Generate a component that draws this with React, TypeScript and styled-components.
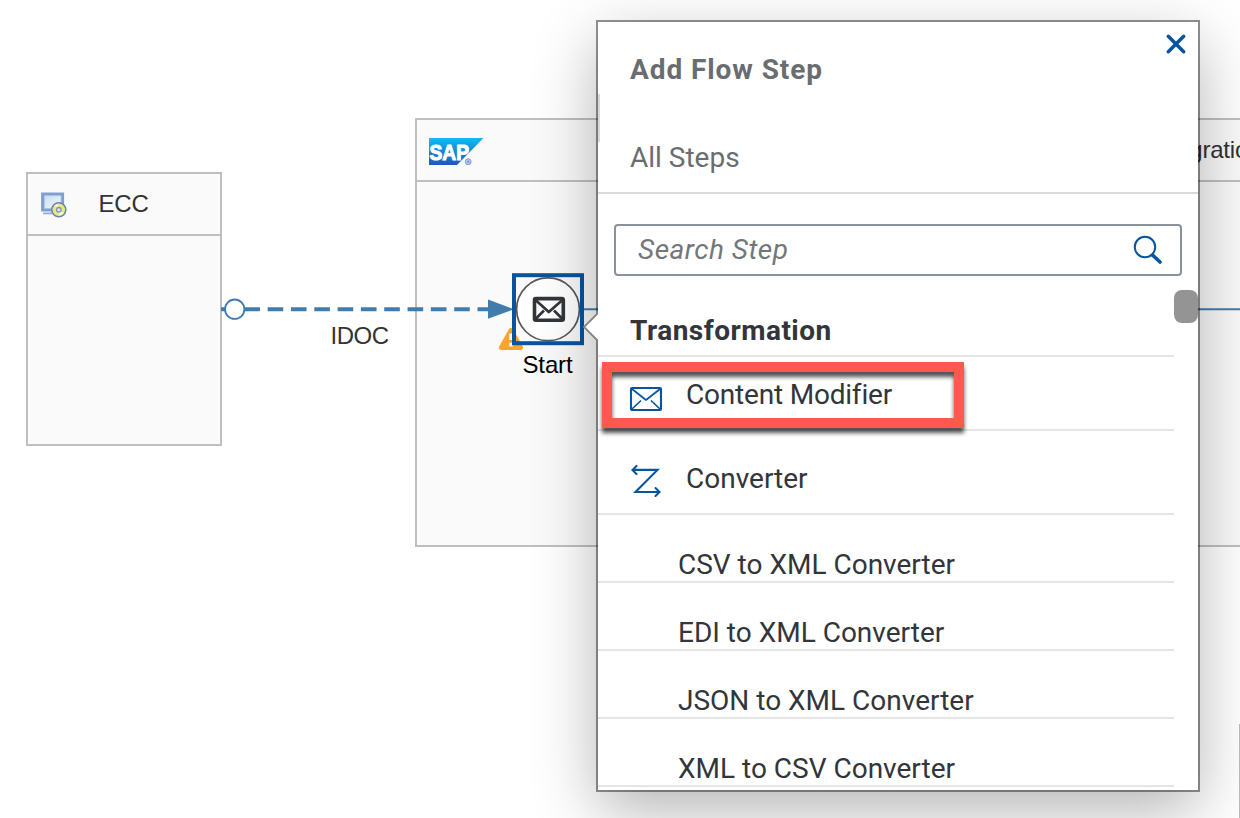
import React from "react";
import styled, { createGlobalStyle } from "styled-components";

const GlobalStyle = createGlobalStyle`
  * { box-sizing: border-box; }
  body { margin: 0; background: #fff; overflow: hidden; }
`;

const Canvas = styled.main`
  position: relative;
  width: 1240px;
  height: 818px;
  overflow: hidden;
  background: #fff;
  font-family: "Liberation Sans", Arial, sans-serif;
  font-size: 24px;
  line-height: 28px;
  color: #333;
`;

const Pool = styled.section<{ $x: number; $y: number; $w: number; $h: number }>`
  position: absolute;
  left: ${(p) => p.$x}px;
  top: ${(p) => p.$y}px;
  width: ${(p) => p.$w}px;
  height: ${(p) => p.$h}px;
  border: 2px solid #bfbfbf;
  background: #fafafa;
`;

const PoolHeader = styled.header<{ $left: number }>`
  display: flex;
  align-items: center;
  height: 62px;
  padding-left: ${(p) => p.$left}px;
  border-bottom: 2px solid #bfbfbf;

  svg {
    flex: none;
  }
`;

const PoolName = styled.span<{ $gap: number }>`
  margin-left: ${(p) => p.$gap}px;
  letter-spacing: -0.2px;
  white-space: nowrap;
`;

const CanvasLabel = styled.span<{ $x: number; $y: number; $spacing: number; $color?: string }>`
  position: absolute;
  left: ${(p) => p.$x}px;
  top: ${(p) => p.$y}px;
  letter-spacing: ${(p) => p.$spacing}px;
  color: ${(p) => p.$color ?? "#333"};
`;

const Connections = styled.svg`
  position: absolute;
  left: 0;
  top: 0;
`;

const CanvasScroll = styled.div`
  position: absolute;
  right: 0;
  top: 724px;
  width: 1px;
  height: 94px;
  background: #bdbdbd;
`;

const Popover = styled.aside`
  position: absolute;
  left: 598px;
  top: 22px;
  width: 600px;
  height: 768px;
  background: #fff;
  box-shadow: 0 0 0 2px rgba(0, 0, 0, 0.42), 0 20px 60px rgba(0, 0, 0, 0.3);
  font-family: Roboto, sans-serif;
  font-size: 28px;
  line-height: 28px;
  color: #32363a;
`;

const PopoverArrow = styled.svg`
  position: absolute;
  left: -16px;
  top: 288px;
`;

const PopoverHeader = styled.header`
  display: flex;
  flex-direction: column;
  gap: 60px;
  height: 172px;
  padding: 34px 32px 0;
  border-bottom: 2px solid #d9d9d9;
  color: #6a6d70;
`;

const Label = styled.span<{ $spacing?: number; $bold?: boolean }>`
  font-weight: ${(p) => (p.$bold ? 700 : 400)};
  letter-spacing: ${(p) => p.$spacing ?? 0}px;
  white-space: nowrap;
`;

const HeaderMark = styled.div`
  position: absolute;
  left: 0;
  top: 72px;
  width: 2px;
  height: 48px;
  background: #d9d9d9;
`;

const CloseButton = styled.button`
  position: absolute;
  right: 10px;
  top: 10px;
  width: 24px;
  height: 24px;
  padding: 0;
  border: 0;
  background: none;
`;

const SearchField = styled.div`
  display: flex;
  justify-content: space-between;
  margin: 30px 16px 0;
  height: 52px;
  padding: 10px 16px 0 22px;
  border: 2px solid #89919a;
  border-radius: 4px;
  color: #74777a;
  font-style: italic;
`;

const SearchIcon = styled.svg`
  flex: none;
  margin-top: -1px;
`;

const StepList = styled.ul`
  list-style: none;
  margin: 0 24px 0 0;
  padding: 0;
`;

const Row = styled.li<{ $height: number; $top: number; $left: number }>`
  display: flex;
  height: ${(p) => p.$height}px;
  padding: ${(p) => p.$top}px 0 0 ${(p) => p.$left}px;
  border-bottom: 2px solid #e5e5e5;
`;

const StepIcon = styled.svg`
  flex: none;
  margin: -1px 22px 0 -2px;
`;

const ScrollThumb = styled.div`
  position: absolute;
  right: 0;
  top: 268px;
  width: 24px;
  height: 33px;
  border-radius: 8px;
  background: #949494;
`;

const Highlight = styled.div`
  position: absolute;
  left: 4px;
  top: 340px;
  width: 362px;
  height: 66px;
  border: 10px solid #ff594c;
  filter: drop-shadow(0 5px 2px rgba(0, 0, 0, 0.68));
`;

const SystemIcon = () => (
  <svg width="28" height="28" viewBox="0 0 28 28">
    <defs>
      <linearGradient id="screen" x1="0" y1="0" x2="1" y2="1">
        <stop offset="0" stopColor="#c4dcf0" />
        <stop offset="1" stopColor="#f4fbff" />
      </linearGradient>
    </defs>
    <rect x="2.6" y="4" width="20" height="16" fill="url(#screen)" stroke="#7f9fd0" strokeWidth="3" />
    <path d="M4.5 5.7h16.5v12.8h-16.5z" fill="none" stroke="#a9c4e4" strokeWidth="0.8" />
    <path d="M3 23.4h9" stroke="#8fadd8" strokeWidth="1.8" />
    <circle cx="18.8" cy="19.8" r="7" fill="#e9e77f" stroke="#6584b3" strokeWidth="1.5" />
    <path d="M14 16a6 6 0 0 1 4-2.3l.5 3.5z M24 22.5a6 6 0 0 1-5 3l-.5-4z" fill="#f7f8dc" />
    <circle cx="18.8" cy="19.8" r="2.3" fill="#dce8f5" stroke="#7f97b5" strokeWidth="1.3" />
  </svg>
);

const SapLogo = () => (
  <svg width="56" height="30" viewBox="0 0 56 30">
    <defs>
      <linearGradient id="sap" x1="0" y1="0" x2="0" y2="1">
        <stop offset="0" stopColor="#10bdf0" />
        <stop offset="0.5" stopColor="#1588d8" />
        <stop offset="1" stopColor="#1e58b8" />
      </linearGradient>
    </defs>
    <path d="M0 3h54.5L28 30H0z" fill="url(#sap)" />
    <text x="0.5" y="24.6" textLength="39.5" lengthAdjust="spacingAndGlyphs" fontFamily="Liberation Sans" fontWeight="700" fontSize="21.5" fill="#fff" stroke="#fff" strokeWidth="1.1">SAP</text>
    <circle cx="39.2" cy="26.7" r="2.9" fill="#b7c9ec" stroke="#7897d8" />
    <circle cx="39.2" cy="26.7" r="1" fill="#6486cf" />
  </svg>
);

const subSteps = [
  "CSV to XML Converter",
  "EDI to XML Converter",
  "JSON to XML Converter",
  "XML to CSV Converter",
];

export default function App() {
  return (
    <>
      <GlobalStyle />
      <Canvas>
        <Pool $x={25.5} $y={172} $w={196.5} $h={274}>
          <PoolHeader $left={12}>
            <SystemIcon />
            <PoolName $gap={31}>ECC</PoolName>
          </PoolHeader>
        </Pool>
        <Pool $x={415} $y={118} $w={900} $h={429}>
          <PoolHeader $left={12}>
            <SapLogo />
            <PoolName $gap={665}>Integration Process</PoolName>
          </PoolHeader>
        </Pool>
        <Connections width="1240" height="818" viewBox="0 0 1240 818">
          <path d="M221 309.2H490" stroke="#427cac" strokeWidth="4" strokeDasharray="15.6 7.72" />
          <path d="M488 299.5L514 309.2L488 318.7z" fill="#427cac" />
          <circle cx="234.7" cy="309.2" r="9.7" fill="#fff" stroke="#427cac" strokeWidth="1.9" />
          <path d="M582 309.2H1240" stroke="#427cac" strokeWidth="2" />
          <path d="M511 330.5L520.5 347.5H501.5z" fill="#faa42b" stroke="#faa42b" strokeWidth="5" strokeLinejoin="round" />
          <path d="M511 333.5v6.5M511 342.8v3.7" stroke="#fff" strokeWidth="3.4" />
          <circle cx="548" cy="309.3" r="31.4" fill="#fff" stroke="#57585a" strokeWidth="1.7" />
          <rect x="514" y="275.2" width="68" height="68" fill="none" stroke="#0854a0" strokeWidth="4" />
          <g fill="none" stroke="#32363a" strokeWidth="3.6" strokeLinejoin="round">
            <rect x="534.5" y="298.6" width="28.8" height="21.6" rx="1.5" />
            <path d="M535 299.5L548.8 312L563 299.5M535 319.5L544 310.5M563 319.5L554 310.5" strokeWidth="2.7" />
          </g>
        </Connections>
        <CanvasLabel $x={330.5} $y={322} $spacing={-0.5}>IDOC</CanvasLabel>
        <CanvasLabel $x={522.5} $y={351} $spacing={-0.15} $color="#000">Start</CanvasLabel>
        <CanvasScroll />

        <Popover>
          <PopoverArrow width="18" height="34" viewBox="0 0 18 34">
            <path d="M17 2L2 17L17 32" fill="#fff" stroke="#858585" strokeWidth="1.8" />
            <path d="M16 0V34H18V0z" fill="#fff" />
          </PopoverArrow>
          <PopoverHeader>
            <Label $bold $spacing={0.92}>Add Flow Step</Label>
            <Label>All Steps</Label>
          </PopoverHeader>
          <HeaderMark />
          <CloseButton aria-label="Close">
            <svg width="24" height="24" viewBox="0 0 24 24">
              <path d="M4.3 4.3L19.7 19.7M19.7 4.3L4.3 19.7" stroke="#0854a0" strokeWidth="3.5" strokeLinecap="round" />
            </svg>
          </CloseButton>
          <SearchField>
            <Label $spacing={0.5}>Search Step</Label>
            <SearchIcon width="32" height="32" viewBox="0 0 32 32" fill="none" stroke="#0854a0">
              <circle cx="13" cy="12" r="10.2" strokeWidth="2" />
              <path d="M21 20.5L28 27" strokeWidth="3.7" strokeLinecap="round" />
            </SearchIcon>
          </SearchField>
          <StepList>
            <Row $height={81} $top={41} $left={32}>
              <Label $bold $spacing={0.48}>Transformation</Label>
            </Row>
            <Row $height={74} $top={24} $left={32}>
              <StepIcon width="36" height="36" viewBox="0 0 36 36" fill="none" stroke="#0854a0" strokeWidth="2.1" strokeLinejoin="round">
                <rect x="3" y="8" width="30" height="22" rx="1" />
                <path d="M4 9L18 20L32 9M4 29L13 20.5M32 29L23 20.5" strokeWidth="1.7" />
              </StepIcon>
              <Label $spacing={-0.2}>Content Modifier</Label>
            </Row>
            <Row $height={84} $top={34} $left={32}>
              <StepIcon width="36" height="36" viewBox="0 0 36 36" fill="none" stroke="#0854a0" strokeWidth="2.1">
                <path d="M5 5.9H29.5L7.5 28H31" />
                <path d="M8.5 1.9L4.5 5.9L8.5 9.9M27.5 24L31.5 28L27.5 32" strokeLinecap="round" />
              </StepIcon>
              <Label>Converter</Label>
            </Row>
            {subSteps.map((name) => (
              <Row key={name} $height={68} $top={36} $left={80}>
                <Label>{name}</Label>
              </Row>
            ))}
          </StepList>
          <ScrollThumb />
          <Highlight />
        </Popover>
      </Canvas>
    </>
  );
}
